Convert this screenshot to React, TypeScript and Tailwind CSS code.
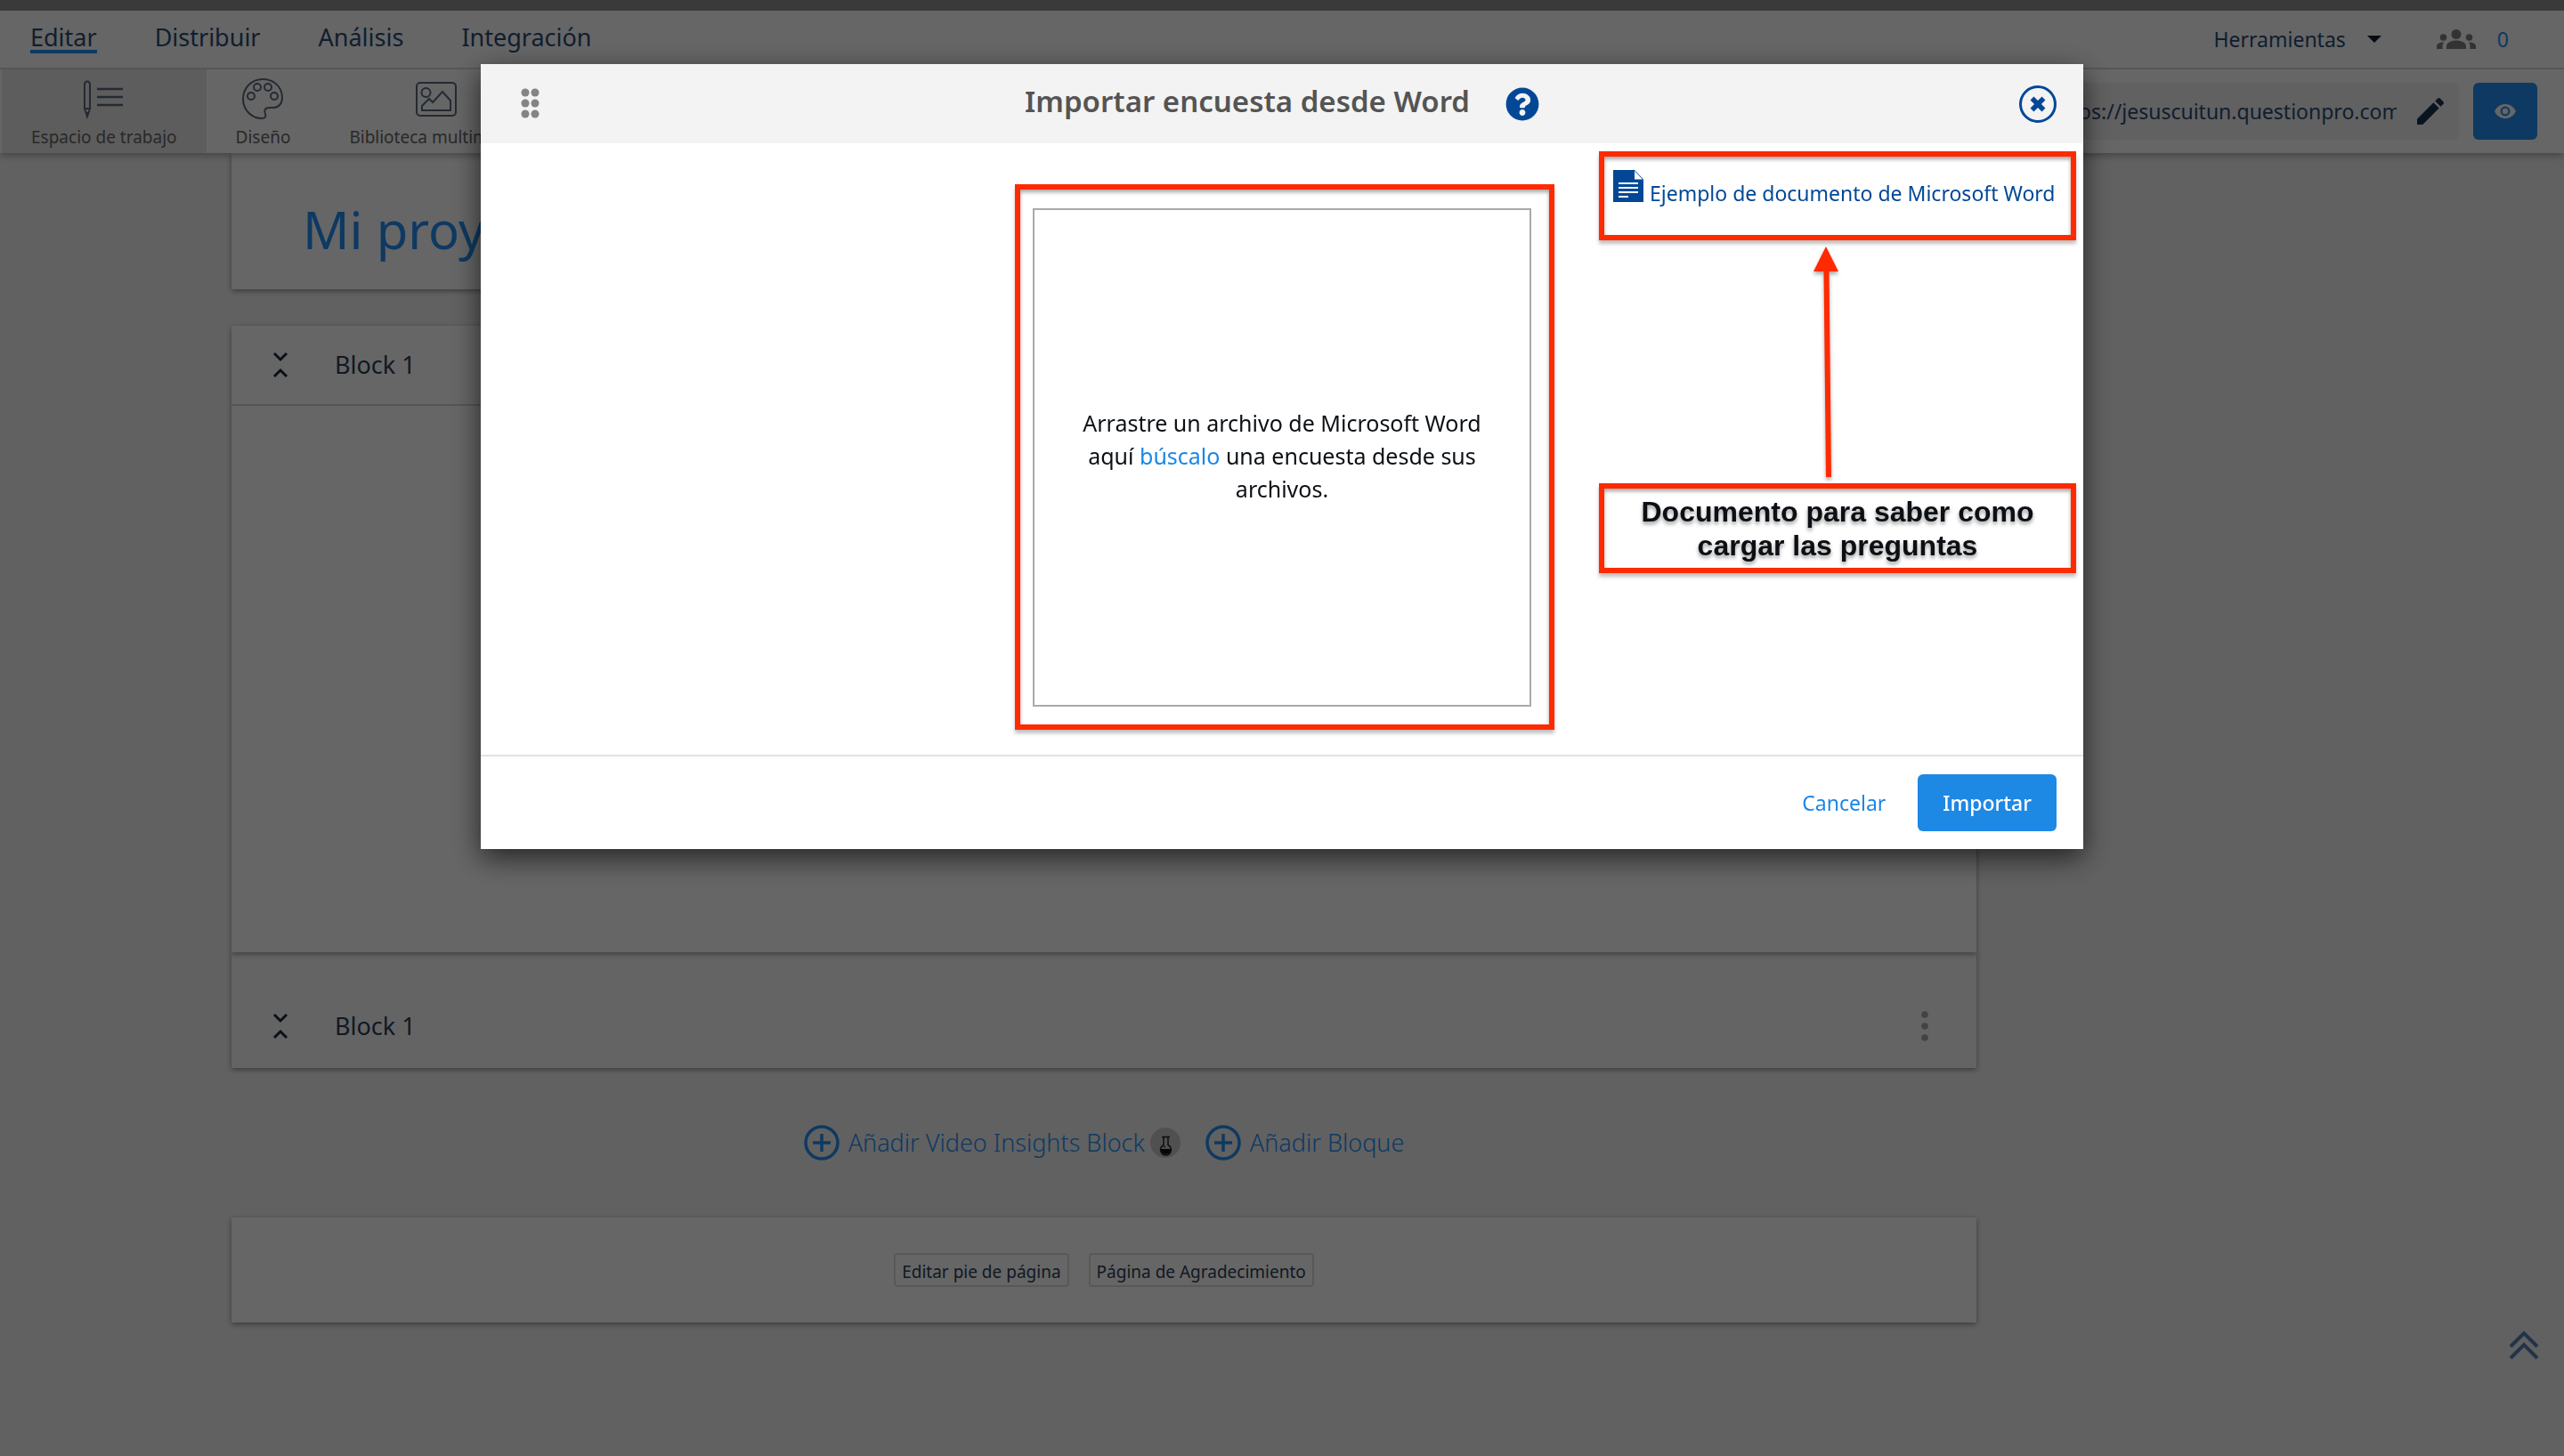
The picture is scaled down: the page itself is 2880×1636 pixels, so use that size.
import { ReactNode } from "react";

const navItems = ["Editar", "Distribuir", "Análisis", "Integración"];

function WorkspaceIcon() {
  return (
    <svg width="46" height="46" viewBox="0 0 46 46" fill="none" stroke="currentColor" strokeWidth="2">
      <path d="M1 34V7q0-3.500 3-3.500T7 7v27L4 43z" />
      <path d="M1 34h6M3 39h2" />
      <path d="M15 12h29M15 21h29M15 30h29" strokeWidth="2.500" />
    </svg>
  );
}

function PaletteIcon() {
  return (
    <svg width="46" height="46" viewBox="0 0 46 46" fill="none" stroke="currentColor" strokeWidth="2">
      <path d="M23 1C10.500 1 1 11 1 23s9 22 21 22c4 0 5-2 4-5-2-4 0-7 4-7h5c6 0 10-5 10-11C45 9 35 1 23 1z" />
      <circle cx="10" cy="20" r="4" />
      <circle cx="17" cy="10" r="4" />
      <circle cx="29" cy="10" r="4" />
      <circle cx="36" cy="20" r="4" />
    </svg>
  );
}

function LibraryIcon() {
  return (
    <svg width="46" height="46" viewBox="0 0 46 46" fill="none" stroke="currentColor" strokeWidth="2">
      <rect x="1" y="5" width="44" height="37" rx="4" />
      <circle cx="11.500" cy="16" r="5" />
      <path d="M7 36v-5l8-8 4 4 11-12 9 10v11z" />
    </svg>
  );
}

function CollapseIcon() {
  return (
    <svg width="18" height="30" viewBox="0 0 18 30" fill="none" stroke="currentColor" strokeWidth="3">
      <path d="M2 2l7 7 7-7M2 28l7-7 7 7" />
    </svg>
  );
}

function PlusCircleIcon() {
  return (
    <svg width="40" height="40" viewBox="0 0 40 40" fill="none" stroke="currentColor" strokeWidth="3.500">
      <circle cx="20" cy="20" r="18" />
      <path d="M20 10v20M10 20h20" />
    </svg>
  );
}

function FlaskIcon() {
  return (
    <svg width="34" height="34" viewBox="0 0 34 34">
      <circle cx="17" cy="17" r="17" fill="#c8c8c8" />
      <path d="M15 11v8.500a6 6 0 1 0 5 0V11" fill="none" stroke="#222" strokeWidth="1.500" />
      <path d="M13 10.500h9" stroke="#222" strokeWidth="1.500" />
      <path d="M11.500 24a6 6 0 0 0 12 0z" fill="#111" />
      <circle cx="16" cy="21.500" r="1" fill="#222" />
    </svg>
  );
}

function PeopleIcon() {
  return (
    <svg width="44" height="22" viewBox="0 0 44 22" fill="currentColor">
      <circle cx="22" cy="5.500" r="5.500" />
      <circle cx="7.500" cy="9" r="3.800" />
      <circle cx="36.500" cy="9" r="3.800" />
      <path d="M11 22v-3c0-4 5-6.500 11-6.500S33 15 33 19v3z" />
      <path d="M0 22v-3c0-3 3-4.500 8-4.500-1 1.500-1.500 3-1.500 5V22zM44 22v-3c0-3-3-4.500-8-4.500 1 1.500 1.500 3 1.500 5V22z" />
    </svg>
  );
}

function PencilIcon() {
  return (
    <svg width="40" height="40" viewBox="0 0 24 24" fill="currentColor">
      <path d="M3 17.250V21h3.750L17.810 9.940l-3.750-3.750L3 17.250zM20.710 7.040a1 1 0 0 0 0-1.410l-2.340-2.340a1 1 0 0 0-1.410 0l-1.830 1.830 3.750 3.750 1.830-1.830z" />
    </svg>
  );
}

function EyeIcon() {
  return (
    <svg width="26" height="26" viewBox="0 0 24 24" fill="currentColor">
      <path d="M12 4.500C7 4.500 2.730 7.610 1 12c1.730 4.390 6 7.500 11 7.500s9.270-3.110 11-7.500c-1.730-4.390-6-7.500-11-7.500zM12 17a5 5 0 1 1 0-10 5 5 0 0 1 0 10zm0-8a3 3 0 1 0 0 6 3 3 0 0 0 0-6z" />
    </svg>
  );
}

function DocumentIcon() {
  return (
    <svg width="34" height="36" viewBox="0 0 34 36" className="shrink-0">
      <path d="M0 0h24l10 10.500V36H0z" fill="#024896" />
      <path d="M24 1l9 9.500h-9z" fill="#fff" />
      <path d="M6 15h22M6 20h22M6 25h22M6 30h11" stroke="#fff" strokeWidth="2.200" />
    </svg>
  );
}

function ArrowUp() {
  return (
    <svg
      width="536"
      height="273"
      viewBox="0 0 536 273"
      className="drop-shadow-[0_3px_2px_rgba(0,0,0,0.35)]"
    >
      <path d="M255 7l14 28h-28z" fill="#ff2a00" />
      <path d="M255.500 34l2.500 232" stroke="#ff2a00" strokeWidth="6" />
    </svg>
  );
}

function ToolTab({ label, icon, active }: { label: string; icon: ReactNode; active?: boolean }) {
  return (
    <button
      className={`flex flex-col items-center gap-1.5 px-[33px] pt-2.5 whitespace-nowrap text-[#5b6a80] ${
        active ? "bg-[#e8e8e8]" : ""
      }`}
    >
      {icon}
      <span className="text-[19px] leading-7 text-[#666]">{label}</span>
    </button>
  );
}

function Header() {
  return (
    <header className="relative bg-white shadow-[0_3px_8px_rgba(0,0,0,0.3)]">
      <div className="h-3 bg-[#919191]" />

      <div className="flex items-center justify-between h-[66px] pl-[34px] pr-[62px] border-b-2 border-[#d8d8d8]">
        <nav className="flex gap-[65px] text-[27px] leading-7 text-[#2b4d75]">
          {navItems.map((item, index) => (
            <a
              key={item}
              href="#"
              className={index === 0 ? "border-b-4 border-[#2490f5]" : "border-b-4 border-transparent"}
            >
              {item}
            </a>
          ))}
        </nav>

        <div className="flex items-center text-[23px] leading-8 text-[#2b4d75]">
          <button className="flex items-center gap-6">
            Herramientas
            <svg width="16" height="8" viewBox="0 0 16 8" fill="#111c2c">
              <path d="M0 0h16l-8 8z" />
            </svg>
          </button>
          <span className="ml-[62px] text-[#808080]">
            <PeopleIcon />
          </span>
          <a href="#" className="ml-6 text-[#2490f5]">
            0
          </a>
        </div>
      </div>

      <div className="flex justify-between h-[94px] pl-0.5">
        <div className="flex">
          <ToolTab label="Espacio de trabajo" icon={<WorkspaceIcon />} active />
          <ToolTab label="Diseño" icon={<PaletteIcon />} />
          <ToolTab label="Biblioteca multimedia" icon={<LibraryIcon />} />
        </div>

        <div className="flex items-center gap-4 pr-[30px]">
          <div className="flex items-center gap-[18px] h-16 pl-6 pr-3 rounded-md bg-[#f3f3f3]">
            <input
              aria-label="Enlace de la encuesta"
              readOnly
              defaultValue="https://jesuscuitun.questionpro.com"
              className="w-[388px] bg-transparent text-[23px] leading-8 text-[#2b4d75]"
            />
            <button aria-label="Editar enlace" className="text-[#1b3350]">
              <PencilIcon />
            </button>
          </div>
          <button
            aria-label="Vista previa"
            className="flex items-center justify-center w-[72px] h-16 rounded-md bg-[#2490f5] text-white"
          >
            <EyeIcon />
          </button>
        </div>
      </div>
    </header>
  );
}

function BlockTitle() {
  return (
    <div className="flex items-center gap-[52px] text-[#1b2a3c]">
      <button aria-label="Contraer bloque">
        <CollapseIcon />
      </button>
      <h2 className="text-[27px] leading-9 text-[#2b4058]">Block 1</h2>
    </div>
  );
}

function Workspace() {
  return (
    <main className="pl-[260px] pr-[660px]">
      <section className="h-[153px] pl-20 pt-[46px] bg-white shadow-[0_2px_6px_rgba(0,0,0,0.4)]">
        <h1 className="text-[58px] leading-[80px] text-[#2490f5]">Mi proyecto</h1>
      </section>

      <section className="relative mt-[41px] bg-white shadow-[0_2px_6px_rgba(0,0,0,0.4)]">
        <div className="flex items-center h-[90px] pl-[46px] border-b-2 border-[#d4d4d4]">
          <BlockTitle />
        </div>
        <div className="h-[614px]" />
      </section>

      <section className="flex items-center justify-between h-[130px] pl-[46px] pr-[54px] pt-9 bg-[#fafafa] shadow-[0_2px_6px_rgba(0,0,0,0.4)]">
        <BlockTitle />
        <button aria-label="Opciones del bloque">
          <svg width="8" height="34" viewBox="0 0 8 34" fill="#a8a8a8">
            <circle cx="4" cy="4" r="3.800" />
            <circle cx="4" cy="17" r="3.800" />
            <circle cx="4" cy="30" r="3.800" />
          </svg>
        </button>
      </section>

      <div className="flex items-center justify-center gap-7 h-[168px] text-[27px] leading-9 font-light text-[#2490f5]">
        <div className="flex items-center gap-1.5">
          <button className="flex items-center gap-2.5">
            <PlusCircleIcon />
            Añadir Video Insights Block
          </button>
          <FlaskIcon />
        </div>
        <button className="flex items-center gap-2.5">
          <PlusCircleIcon />
          Añadir Bloque
        </button>
      </div>

      <section className="flex items-center justify-center gap-[22px] h-[118px] bg-white shadow-[0_2px_6px_rgba(0,0,0,0.4)]">
        <button className="h-[38px] px-[7px] pt-1 border-2 border-[#dcdcdc] rounded text-[19px] leading-7 text-[#2b4058]">
          Editar pie de página
        </button>
        <button className="h-[38px] px-[7px] pt-1 border-2 border-[#dcdcdc] rounded text-[19px] leading-7 text-[#2b4058]">
          Página de Agradecimiento
        </button>
      </section>
    </main>
  );
}

function ImportModal() {
  return (
    <div className="fixed inset-0 flex items-start justify-center pt-[72px] bg-black/60">
      <div
        role="dialog"
        aria-labelledby="import-title"
        className="w-[62.5%] bg-white shadow-[0_10px_30px_rgba(0,0,0,0.65)]"
      >
        <div className="grid grid-cols-[1fr_auto_1fr] items-center h-[89px] px-[30px] bg-[#f3f3f3]">
          <svg width="60" height="36" viewBox="0 0 60 36" fill="#848484">
            <circle cx="20" cy="5" r="4.500" />
            <circle cx="31" cy="5" r="4.500" />
            <circle cx="20" cy="17" r="4.500" />
            <circle cx="31" cy="17" r="4.500" />
            <circle cx="20" cy="29" r="4.500" />
            <circle cx="31" cy="29" r="4.500" />
          </svg>
          <div className="flex items-center gap-10">
            <h2 id="import-title" className="pb-1.5 text-[33px] leading-[48px] font-semibold text-[#545454]">
              Importar encuesta desde Word
            </h2>
            <button aria-label="Ayuda">
              <svg width="38" height="38" viewBox="0 0 512 512" fill="#024896">
                <path d="M504 256c0 136.997-111.043 248-248 248S8 392.997 8 256C8 119.083 119.043 8 256 8s248 111.083 248 248zM262.655 90c-54.497 0-89.255 22.957-116.549 63.758-3.536 5.286-2.353 12.415 2.715 16.258l34.699 26.310c5.205 3.947 12.621 3.008 16.665-2.122 17.864-22.658 30.113-35.797 57.303-35.797 20.429 0 45.698 13.148 45.698 32.958 0 14.976-12.363 22.667-32.534 33.976C247.128 238.528 216 254.941 216 296v4c0 6.627 5.373 12 12 12h56c6.627 0 12-5.373 12-12v-1.333c0-28.462 83.186-29.647 83.186-106.667 0-58.002-60.165-102-116.531-102zM256 338c-25.365 0-46 20.635-46 46 0 25.364 20.635 46 46 46s46-20.636 46-46c0-25.365-20.635-46-46-46z" />
              </svg>
            </button>
          </div>
          <button aria-label="Cerrar" className="justify-self-end">
            <svg width="42" height="42" viewBox="0 0 42 42" fill="none" stroke="#024896">
              <circle cx="21" cy="21" r="19.500" strokeWidth="3" />
              <path d="M14.500 14.500l13 13M27.500 14.500l-13 13" strokeWidth="5.500" />
            </svg>
          </button>
        </div>

        <div className="grid grid-cols-[1fr_auto_1fr] pl-1.5 pb-7">
          <div />
          <div className="mt-[46px] pt-[21px] pb-5 pl-3.5 pr-5 border-6 border-[#ff2a00] shadow-[0_4px_4px_rgba(0,0,0,0.25),inset_0_3px_4px_rgba(0,0,0,0.35)]">
            <div className="flex items-center justify-center w-[560px] h-[560px] px-10 pb-1 border-2 border-[#a9a9a9] text-center text-[25px] leading-[37px] text-[#0c1014]">
              <p>
                Arrastre un archivo de Microsoft Word aquí{" "}
                <a href="#" className="text-[#1b87e6]">
                  búscalo
                </a>{" "}
                una encuesta desde sus archivos.
              </p>
            </div>
          </div>

          <div className="flex flex-col items-end pt-[9px] pr-2">
            <div className="w-[536px] h-[100px] pt-[15px] pl-2.5 border-6 border-[#ff2a00] shadow-[0_4px_4px_rgba(0,0,0,0.25),inset_0_3px_4px_rgba(0,0,0,0.35)]">
              <a href="#" className="flex gap-[7px] whitespace-nowrap text-[23px] text-[#024896]">
                <DocumentIcon />
                <span className="pt-2.5 leading-8">Ejemplo de documento de Microsoft Word</span>
              </a>
            </div>
            <ArrowUp />
            <div className="w-[536px] h-[101px] pt-[7px] border-6 border-[#ff2a00] text-center font-['Liberation_Sans',sans-serif] text-[32px] leading-[38px] font-bold text-[#0c1014] shadow-[0_4px_4px_rgba(0,0,0,0.25),inset_0_3px_4px_rgba(0,0,0,0.35)] text-shadow-[0_3px_4px_rgba(0,0,0,0.4)]">
              Documento para saber como
              <br />
              cargar las preguntas
            </div>
          </div>
        </div>

        <div className="flex items-center justify-end gap-9 h-[106px] pr-[30px] border-t-2 border-[#e2e2e2] text-[23px]">
          <button className="text-[#1b87e6]">Cancelar</button>
          <button className="h-16 px-7 rounded-md bg-[#1e88e5] font-medium text-white">Importar</button>
        </div>
      </div>
    </div>
  );
}

export default function App() {
  return (
    <div className="min-h-screen bg-[#f3f3f3] font-['Noto_Sans',sans-serif]">
      <Header />
      <Workspace />
      <a href="#" aria-label="Volver arriba" className="fixed right-7 bottom-[106px] text-[#5582b4]">
        <svg width="34" height="36" viewBox="0 0 34 36" fill="none" stroke="currentColor" strokeWidth="4">
          <path d="M2 19L17 4l15 15M2 32l15-15 15 15" />
        </svg>
      </a>
      <ImportModal />
    </div>
  );
}
